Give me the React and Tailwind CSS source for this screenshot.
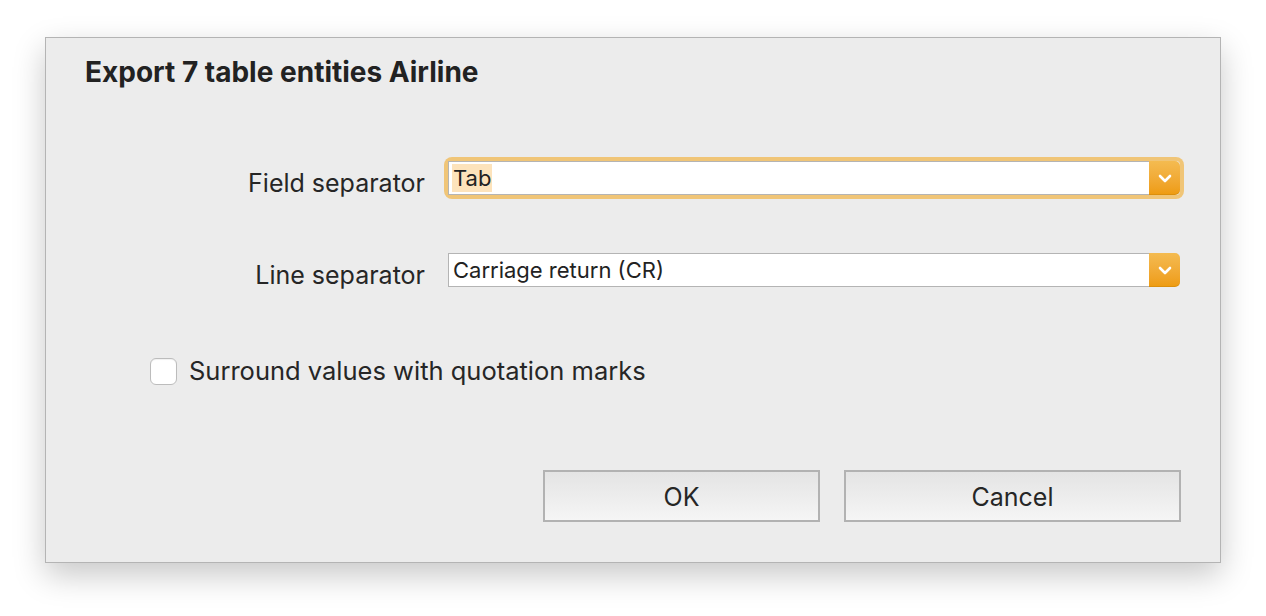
import React from 'react';

const font = { fontFamily: 'Inter, "Noto Sans", sans-serif' };

const Chevron = () => (
  <svg width="14" height="9" viewBox="0 0 14 9" fill="none">
    <path d="M2 2l5 5 5-5" stroke="white" strokeWidth="2.6" strokeLinecap="round" strokeLinejoin="round" />
  </svg>
);

const SelectBox = ({ value, focused }) => (
  <div
    className={`w-[732px] h-[34px] flex items-stretch rounded-[4px] ${
      focused ? 'ring-4 ring-[#f0c577]' : ''
    }`}
  >
    <div className="flex-1 flex items-center bg-white border border-[#b4b4b4] border-r-0 pl-[3px]">
      <span className={`text-[22px] leading-[28px] text-[#222] px-[1px] ${focused ? 'bg-[#fde3bb]' : ''}`}>
        {value}
      </span>
    </div>
    <div className="w-[31px] flex items-center justify-center rounded-r-[5px] bg-gradient-to-b from-[#f4bb50] to-[#ee9b0c] shadow-[inset_0_-1px_0_rgba(0,0,0,0.08)]">
      <Chevron />
    </div>
  </div>
);

export default function App() {
  return (
    <div className="min-h-[616px] bg-white pt-[37px] pl-[45px]" style={font}>
      <div className="w-[1176px] h-[526px] bg-[#ececec] border border-[#b4b4b4] shadow-[0_12px_30px_rgba(0,0,0,0.22)] flex flex-col">
        <h1 className="pl-[39px] pt-[17px] text-[28px] leading-[34px] font-bold text-[#222]">
          Export 7 table entities Airline
        </h1>

        <div className="mt-[72px] flex items-start gap-[23px]">
          <label className="w-[379px] mt-[5px] text-right text-[25px] leading-[34px] text-[#262626]">Field separator</label>
          <SelectBox value="Tab" focused />
        </div>

        <div className="mt-[53px] flex items-start gap-[23px]">
          <label className="w-[379px] mt-[5px] text-right text-[25px] leading-[34px] text-[#262626]">Line separator</label>
          <SelectBox value="Carriage return (CR)" />
        </div>

        <label className="mt-[64px] ml-[104px] flex items-center gap-[12px]">
          <span className="w-[27px] h-[27px] rounded-[6px] bg-white border border-[#bcbcbc] shadow-[inset_0_1px_1px_rgba(0,0,0,0.06)]" />
          <span className="text-[25.5px] leading-[30px] text-[#262626]">Surround values with quotation marks</span>
        </label>

        <div className="mt-auto mb-[40px] mr-[39px] flex justify-end gap-[24px]">
          <button className="w-[277px] h-[52px] pt-[3px] border-2 border-[#b2b2b2] bg-gradient-to-b from-[#e4e4e4] to-[#f5f5f5] text-[25px] text-[#262626]">
            OK
          </button>
          <button className="w-[337px] h-[52px] pt-[3px] border-2 border-[#b2b2b2] bg-gradient-to-b from-[#e4e4e4] to-[#f5f5f5] text-[25px] text-[#262626]">
            Cancel
          </button>
        </div>
      </div>
    </div>
  );
}
